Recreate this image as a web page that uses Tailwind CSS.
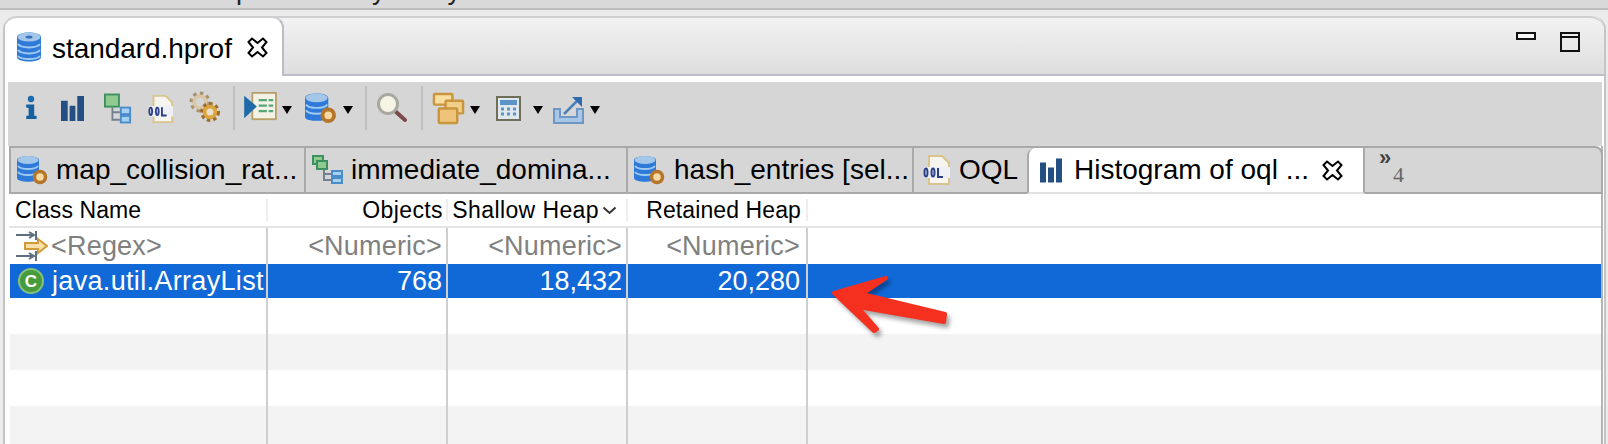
<!DOCTYPE html>
<html lang="en">
<head>
    <meta charset="UTF-8">
    <title>standard.hprof</title>
    <script src="https://cdn.jsdelivr.net/npm/@tailwindcss/browser@4"></script>
</head>
<body class="bg-[#ececec] w-[1608px] h-[444px] overflow-hidden relative font-['Liberation_Sans',sans-serif] text-black">
    <!-- Window strip above the editor, only descenders of its text are visible -->
    <div class="h-[10px] bg-[#d9d9d9] border-b-2 border-[#bdbdbd] overflow-hidden">
        <div class="flex text-[27px] leading-none -mt-[23px] text-[#222]">
            <span class="ml-[236px]">p</span>
            <span class="ml-[121px]">y</span>
            <span class="ml-[62px]">y</span>
        </div>
    </div>

    <!-- Editor area -->
    <div class="ml-[3px] mr-[2px] mt-[6px] h-[428px] flex flex-col bg-white border-l-2 border-r-2 border-[#c4c4c4] rounded-t-[14px] relative">
        <!-- Editor title bar -->
        <div class="h-[60px] shrink-0 flex items-stretch rounded-t-[14px] bg-gradient-to-b from-[#f2f2f2] to-[#dedede] border-t-2 border-b-2 border-t-[#cfcfcf] border-b-[#bdbdc9]">
            <div class="w-[279px] bg-white rounded-t-[12px] border-r-2 border-[#bcbcc8] flex items-center pl-[11px] pt-[3px] -mt-[2px] -mb-[2px] border-t-2 border-t-[#cfcfcf]">
                <svg class="w-[28px] h-[32px] shrink-0 -mt-[3px]" viewBox="0 0 28 32">
                    <path d="M1 6c0-6 24-6 24 0v20c0 6-24 6-24 0Z" fill="#2f79d9"/>
                    <ellipse cx="13" cy="6" rx="11.500" ry="4.500" fill="#a3c7e8"/>
                    <ellipse cx="13" cy="6" rx="3.500" ry="1.500" fill="#3a70b8"/>
                    <path d="M2 13c3 4.500 19 4.500 22 0M2 19c3 4.500 19 4.500 22 0M2 25c3 4 19 4 22 0" fill="none" stroke="#9fcbf2" stroke-width="2"/>
                </svg>
                <span class="ml-[8px] text-[28px] leading-none whitespace-nowrap tracking-[-0.05px]">standard.hprof</span>
                <svg class="ml-[15px] w-[21px] h-[21px] shrink-0 -mt-[3px]" viewBox="0 0 21 21">
                    <path d="M1.500 5 5 1.500 10.500 6 16 1.500 19.500 5 15 10.500 19.500 16 16 19.500 10.500 15 5 19.500 1.500 16 6 10.500Z" fill="#fff" stroke="#000" stroke-width="2"/>
                </svg>
            </div>
            <div class="flex-1 flex items-start justify-end pt-[14px] pr-[24px] gap-[24px]">
                <div class="w-[20px] h-[8px] border-2 border-[#111] bg-white/60"></div>
                <div class="w-[20px] h-[20px] border-2 border-[#111]"><div class="h-[2px] mt-[2px] bg-[#111]"></div></div>
            </div>
        </div>

        <div class="h-[6px] shrink-0 bg-white"></div>

        <!-- Toolbar -->
        <div class="h-[64px] shrink-0 ml-[3px] mr-[2px] bg-[#d6d6d6] flex items-start pt-[10px] pl-[15px]">
            <svg class="w-[16px] h-[24px] mt-[3px]" viewBox="0 0 20 30"><circle cx="10" cy="5" r="4" fill="#1c6cb0"/><path d="M4 12h10v14h3v4H4v-4h3V16H4Z" fill="#15609f"/></svg>
            <svg class="ml-[22px] w-[23px] h-[25px] mt-[4px]" viewBox="0 0 24 26"><path d="M0 5h7v21H0zM9 10h6v16H9zM17 0h7v26h-7z" fill="#234f83"/></svg>
            <svg class="ml-[20px] w-[28px] h-[31px] mt-[1px]" viewBox="0 0 30 32"><path d="M9 15v13h8M9 20h8" fill="none" stroke="#74808f" stroke-width="2"/><rect x="1" y="1" width="15" height="13" fill="#8fcb8f" stroke="#3e8f62" stroke-width="2"/><rect x="18" y="15" width="10" height="7" fill="#a5d0ef" stroke="#4a8bc9" stroke-width="2"/><rect x="18" y="24" width="10" height="7" fill="#a5d0ef" stroke="#4a8bc9" stroke-width="2"/></svg>
            <svg class="ml-[15px] w-[28px] h-[28px] mt-[3px]" viewBox="0 0 28 30"><path d="M6 1h13l7 7v21H6Z" fill="#f6f4ee" stroke="#d8c48c" stroke-width="2"/><rect x="1" y="12" width="26" height="11" fill="#eef0f6"/><path d="M3 13.500c-2 0-2 8 0 8s2-8 0-8ZM10 13.500c-2 0-2 8 0 8s2-8 0-8ZM15 13v9h5" fill="none" stroke="#2a3f88" stroke-width="2"/></svg>
            <svg class="ml-[14px] w-[32px] h-[32px] -mt-[1px]" viewBox="0 0 32 32"><g fill="none"><circle cx="11" cy="11" r="6" stroke="#d8c8a8" stroke-width="4"/><circle cx="11" cy="11" r="9" stroke="#a8906e" stroke-width="3" stroke-dasharray="3.500 3.500"/><circle cx="21" cy="21" r="5.500" fill="#e8e0d0" stroke="#dca63e" stroke-width="4"/><circle cx="21" cy="21" r="8.500" stroke="#9c6c2a" stroke-width="3" stroke-dasharray="3.500 3"/></g></svg>
            <div class="ml-[12px] w-[2px] h-[44px] -mt-[6px] bg-[#bfbfbf]"></div>
            <svg class="ml-[9px] w-[33px] h-[29px]" viewBox="0 0 36 32"><rect x="9" y="1" width="26" height="29" fill="#f4f2e6" stroke="#b99f68" stroke-width="2"/><path d="M16 9h9M16 15h9M16 21h9M27 9h5M27 15h5M27 21h5" stroke="#55a677" stroke-width="2.500"/><path d="M0 4l14 12L0 29Z" fill="#1f6aa8"/></svg>
            <div class="ml-[5px] mt-[14px] w-0 h-0 border-x-[5px] border-x-transparent border-t-[8px] border-t-black"></div>
            <svg class="ml-[12px] w-[33px] h-[31px]" viewBox="0 0 34 32"><path d="M1 6c0-6 24-6 24 0v20c0 5-24 5-24 0Z" fill="#2f79d9"/><ellipse cx="13" cy="6" rx="11.500" ry="4.500" fill="#a3c7e8"/><path d="M2 13c3 4.500 19 4.500 22 0M2 19c3 4.500 19 4.500 22 0" fill="none" stroke="#9fcbf2" stroke-width="2"/><circle cx="25" cy="24" r="6" fill="#f4d9a0" stroke="#b5752a" stroke-width="4"/></svg>
            <div class="ml-[6px] mt-[14px] w-0 h-0 border-x-[5px] border-x-transparent border-t-[8px] border-t-black"></div>
            <div class="ml-[12px] w-[2px] h-[44px] -mt-[6px] bg-[#bfbfbf]"></div>
            <svg class="ml-[10px] w-[30px] h-[30px] mt-[1px]" viewBox="0 0 30 30"><path d="M18 18l10 9" stroke="#7b4a4a" stroke-width="4" stroke-linecap="round"/><circle cx="11" cy="11" r="9.500" fill="#f6f4e4" stroke="#a8a8a0" stroke-width="3"/></svg>
            <div class="ml-[14px] w-[2px] h-[44px] -mt-[6px] bg-[#bfbfbf]"></div>
            <svg class="ml-[9px] w-[33px] h-[33px]" viewBox="0 0 34 34"><g stroke="#c9963e" stroke-width="2.500"><rect x="2" y="2" width="19" height="11" rx="1" fill="#f8dfa0"/><rect x="14" y="9" width="18" height="13" rx="1" fill="#f0cf88"/><rect x="7" y="17" width="19" height="15" rx="1" fill="#eec47a"/></g></svg>
            <div class="ml-[5px] mt-[14px] w-0 h-0 border-x-[5px] border-x-transparent border-t-[8px] border-t-black"></div>
            <svg class="ml-[16px] w-[25px] h-[25px] mt-[4px]" viewBox="0 0 25 25"><rect x="1" y="1" width="23" height="23" fill="#dfe8ee" stroke="#6f6f58" stroke-width="2"/><rect x="4" y="4" width="17" height="5" fill="#5d94c8"/><path d="M5 13h3M11 13h3M17 13h3M5 18h3M11 18h3M17 18h3" stroke="#5d94c8" stroke-width="3"/></svg>
            <div class="ml-[12px] mt-[14px] w-0 h-0 border-x-[5px] border-x-transparent border-t-[8px] border-t-black"></div>
            <svg class="ml-[9px] w-[33px] h-[30px] mt-[3px]" viewBox="0 0 33 30"><path d="M2 14v14h29V14h-6v8H8v-8Z" fill="#a9c6e6" stroke="#6e97c6" stroke-width="2"/><path d="M12 19 26 5" stroke="#4a7fb8" stroke-width="2.500"/><path d="M20 2h10v10Z" fill="#2f6cae"/></svg>
            <div class="ml-[5px] mt-[14px] w-0 h-0 border-x-[5px] border-x-transparent border-t-[8px] border-t-black"></div>
        </div>

        <!-- Result tabs and table -->
        <div class="flex-1 ml-[4px] mr-[1px] border-r-2 border-[#b4b4b4] flex flex-col min-h-0">
            <div class="h-[48px] shrink-0 flex text-[28px] leading-none whitespace-nowrap bg-[#d6d6d6] border-y-2 border-[#a9a9a9] border-l-2 border-l-[#a9a9a9] rounded-tr-[8px] -mr-[2px] border-r-2 border-r-[#a9a9a9]">
                <div class="w-[295px] flex items-center border-r-2 border-[#a9a9a9] pl-[5px]">
                    <svg class="w-[32px] h-[30px] shrink-0" viewBox="0 0 32 30"><path d="M1 5c0-5 22-5 22 0v18c0 5-22 5-22 0Z" fill="#2f79d9"/><ellipse cx="12" cy="5" rx="10.500" ry="4" fill="#a3c7e8"/><path d="M2 11c3 4 17 4 20 0M2 17c3 4 17 4 20 0" fill="none" stroke="#9fcbf2" stroke-width="2"/><circle cx="24" cy="22" r="5.500" fill="#f4d9a0" stroke="#b5752a" stroke-width="3.500"/></svg>
                    <span class="ml-[8px]">map_collision_rat...</span>
                </div>
                <div class="w-[322px] flex items-center border-r-2 border-[#a9a9a9] pl-[6px]">
                    <svg class="w-[32px] h-[30px] shrink-0" viewBox="0 0 32 30"><path d="M12 14v11h7M12 19h7" fill="none" stroke="#74808f" stroke-width="2"/><rect x="1" y="1" width="10" height="8" fill="#8fcb8f" stroke="#3e8f62" stroke-width="2"/><rect x="5" y="6" width="10" height="8" fill="#8fcb8f" stroke="#3e8f62" stroke-width="2"/><rect x="20" y="16" width="10" height="5" fill="#a5d0ef" stroke="#4a8bc9" stroke-width="2"/><rect x="20" y="23" width="10" height="5" fill="#a5d0ef" stroke="#4a8bc9" stroke-width="2"/></svg>
                    <span class="ml-[7px]">immediate_domina...</span>
                </div>
                <div class="w-[286px] flex items-center border-r-2 border-[#a9a9a9] pl-[5px]">
                    <svg class="w-[32px] h-[30px] shrink-0" viewBox="0 0 32 30"><path d="M1 5c0-5 22-5 22 0v18c0 5-22 5-22 0Z" fill="#2f79d9"/><ellipse cx="12" cy="5" rx="10.500" ry="4" fill="#a3c7e8"/><path d="M2 11c3 4 17 4 20 0M2 17c3 4 17 4 20 0" fill="none" stroke="#9fcbf2" stroke-width="2"/><circle cx="24" cy="22" r="5.500" fill="#f4d9a0" stroke="#b5752a" stroke-width="3.500"/></svg>
                    <span class="ml-[9px]">hash_entries [sel...</span>
                </div>
                <div class="w-[113px] flex items-center pl-[9px]">
                    <svg class="w-[28px] h-[30px] shrink-0" viewBox="0 0 28 30"><path d="M6 1h13l7 7v21H6Z" fill="#f6f4ee" stroke="#d8c48c" stroke-width="2"/><rect x="1" y="12" width="26" height="11" fill="#eef0f6"/><path d="M3 13.500c-2 0-2 8 0 8s2-8 0-8ZM10 13.500c-2 0-2 8 0 8s2-8 0-8ZM15 13v9h5" fill="none" stroke="#2a3f88" stroke-width="2"/></svg>
                    <span class="ml-[8px]">OQL</span>
                </div>
                <div class="w-[338px] flex items-center bg-white -mb-[2px] border-x-2 border-b-2 border-x-[#a9a9a9] border-b-[#e2e2e2] rounded-tl-[8px] pl-[11px]">
                    <svg class="w-[22px] h-[25px] shrink-0" viewBox="0 0 22 24"><path d="M0 4h6v20H0zM8 9h6v15H8zM16 0h6v24h-6z" fill="#234f83"/></svg>
                    <span class="ml-[12px]">Histogram of oql ...</span>
                    <svg class="ml-[13px] w-[21px] h-[21px] shrink-0" viewBox="0 0 21 21"><path d="M1.500 5 5 1.500 10.500 6 16 1.500 19.500 5 15 10.500 19.500 16 16 19.500 10.500 15 5 19.500 1.500 16 6 10.500Z" fill="#fff" stroke="#000" stroke-width="2"/></svg>
                </div>
                <div class="flex-1 pl-[14px]">
                    <span class="block text-[22px] font-bold text-[#444] leading-none -mt-[1px]">»</span>
                    <span class="block ml-[14px] -mt-[5px] text-[22px] font-['Liberation_Serif',serif] text-[#666] leading-none">4</span>
                </div>
            </div>

            <!-- Histogram table -->
            <div class="flex-1 min-h-0 text-[27px] leading-none">
                <div class="h-[34px] pl-[1px] grid grid-cols-[258px_180px_180px_180px_1fr] text-[23px] tracking-[0.1px] border-b-2 border-[#e4e4e4] items-center">
                    <div class="pl-[5px] border-r-2 border-[#eeeeee] h-[22px] flex items-center">Class Name</div>
                    <div class="pr-[3px] border-r-2 border-[#eeeeee] h-[22px] flex items-center justify-end tracking-[0.4px]">Objects</div>
                    <div class="pr-[9px] border-r-2 border-[#eeeeee] h-[22px] flex items-center justify-end whitespace-nowrap tracking-[0.4px]">Shallow Heap<svg class="ml-[3px] w-[15px] h-[9px]" viewBox="0 0 15 9"><path d="M1.500 1.500 7.500 7l6-5.500" fill="none" stroke="#333" stroke-width="2"/></svg></div>
                    <div class="pr-[5px] border-r-2 border-[#eeeeee] h-[22px] flex items-center justify-end">Retained Heap</div>
                    <div></div>
                </div>
                <div class="h-[36px] pl-[1px] grid grid-cols-[258px_180px_180px_180px_1fr] text-[#808080] items-center tracking-[0.2px]">
                    <div class="h-full flex items-center pl-[6px] border-r-2 border-[#cfcfcf]">
                        <svg class="w-[32px] h-[30px] shrink-0" viewBox="0 0 32 30"><path d="M0 4h18M13 1l5 3-5 3M20 0v9M0 25h18M13 22l5 3-5 3M20 20v10" fill="none" stroke="#5f6f80" stroke-width="2"/><path d="M9 12h13V8l9 7-9 7v-4H9Z" fill="#f8e0a8" stroke="#d19a38" stroke-width="2"/></svg>
                        <span class="ml-[3px]">&lt;Regex&gt;</span>
                    </div>
                    <div class="h-full flex items-center justify-end pr-[4px] border-r-2 border-[#cfcfcf]">&lt;Numeric&gt;</div>
                    <div class="h-full flex items-center justify-end pr-[4px] border-r-2 border-[#cfcfcf]">&lt;Numeric&gt;</div>
                    <div class="h-full flex items-center justify-end pr-[6px] border-r-2 border-[#cfcfcf]">&lt;Numeric&gt;</div>
                    <div></div>
                </div>
                <div class="h-[34px] ml-[1px] grid grid-cols-[258px_180px_180px_180px_1fr] bg-[#1169d8] text-white items-center">
                    <div class="h-full flex items-center pl-[8px] border-r-2 border-[#cfcfcf]">
                        <span class="w-[26px] h-[26px] rounded-full bg-[#469c3c] border-2 border-[#86c07a] flex items-center justify-center text-[17px] font-bold shrink-0">C</span>
                        <span class="ml-[8px] whitespace-nowrap tracking-[0.33px]">java.util.ArrayList</span>
                    </div>
                    <div class="h-full flex items-center justify-end pr-[4px] border-r-2 border-[#cfcfcf]">768</div>
                    <div class="h-full flex items-center justify-end pr-[4px] border-r-2 border-[#cfcfcf]">18,432</div>
                    <div class="h-full flex items-center justify-end pr-[6px] border-r-2 border-[#cfcfcf]">20,280</div>
                    <div></div>
                </div>
                <div class="h-[36px] ml-[1px] grid grid-cols-[258px_180px_180px_180px_1fr]"><div class="border-r-2 border-[#cfcfcf]"></div><div class="border-r-2 border-[#cfcfcf]"></div><div class="border-r-2 border-[#cfcfcf]"></div><div class="border-r-2 border-[#cfcfcf]"></div></div>
                <div class="h-[36px] ml-[1px] grid grid-cols-[258px_180px_180px_180px_1fr] bg-[#f3f3f3]"><div class="border-r-2 border-[#cfcfcf]"></div><div class="border-r-2 border-[#cfcfcf]"></div><div class="border-r-2 border-[#cfcfcf]"></div><div class="border-r-2 border-[#cfcfcf]"></div></div>
                <div class="h-[36px] ml-[1px] grid grid-cols-[258px_180px_180px_180px_1fr]"><div class="border-r-2 border-[#cfcfcf]"></div><div class="border-r-2 border-[#cfcfcf]"></div><div class="border-r-2 border-[#cfcfcf]"></div><div class="border-r-2 border-[#cfcfcf]"></div></div>
                <div class="h-[38px] ml-[1px] grid grid-cols-[258px_180px_180px_180px_1fr] bg-[#f3f3f3]"><div class="border-r-2 border-[#cfcfcf]"></div><div class="border-r-2 border-[#cfcfcf]"></div><div class="border-r-2 border-[#cfcfcf]"></div><div class="border-r-2 border-[#cfcfcf]"></div></div>
            </div>
        </div>
    </div>

    <!-- Red annotation arrow drawn over the table -->
    <svg class="absolute left-[825px] top-[268px] w-[135px] h-[75px] [filter:drop-shadow(3px_4px_2px_rgba(0,0,0,.35))]" viewBox="825 268 135 75">
        <path d="M834 293 886 278 862 294 945 314 944 322 858 307 877 329 874 331Z" fill="#f5301f" stroke="#f5301f" stroke-width="4" stroke-linejoin="round"/>
    </svg>
</body>
</html>
